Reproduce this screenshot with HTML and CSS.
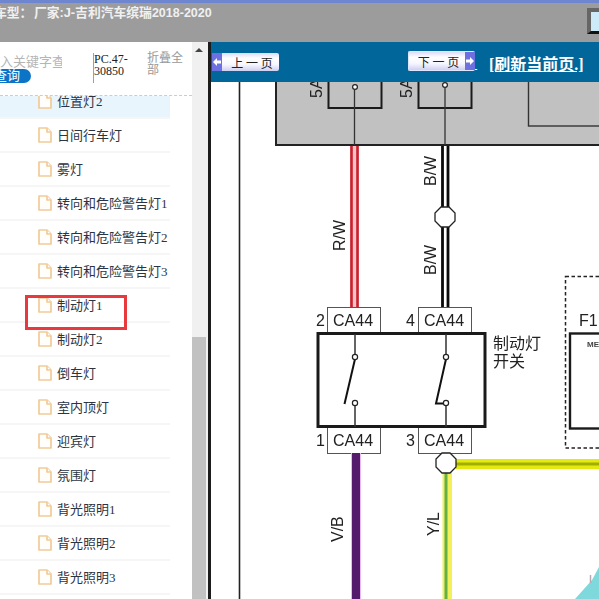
FILE: index.html
```html
<!DOCTYPE html>
<html lang="zh">
<head>
<meta charset="utf-8">
<title>电路图</title>
<link rel="stylesheet" href="styles.css">
</head>
<body>
<div class="page">
  <header class="topbar">
    <div class="title">车型：<span class="title-gap"></span>厂家:J-吉利汽车缤瑞<span class="title-year">2018-2020</span></div>
    <div class="win-icon"></div>
  </header>
  <div class="main">
    <aside class="sidebar">
      <div class="tree">
        <div class="tree-head">
          <div class="search">
            <div class="search-input">输入关键字查询</div>
            <div class="search-btn">查询</div>
          </div>
          <div class="code">PC.47-30850</div>
          <div class="collapse">折叠全部</div>
        </div>
        <ul class="list">
          <li class="row row-active"><svg class="file" viewBox="0 0 14 16"><path d="M1 1h8l4 4v10H1z"/><path d="M9 1v4h4"/></svg>位置灯2</li>
          <li class="row"><svg class="file" viewBox="0 0 14 16"><path d="M1 1h8l4 4v10H1z"/><path d="M9 1v4h4"/></svg>日间行车灯</li>
          <li class="row"><svg class="file" viewBox="0 0 14 16"><path d="M1 1h8l4 4v10H1z"/><path d="M9 1v4h4"/></svg>雾灯</li>
          <li class="row"><svg class="file" viewBox="0 0 14 16"><path d="M1 1h8l4 4v10H1z"/><path d="M9 1v4h4"/></svg>转向和危险警告灯1</li>
          <li class="row"><svg class="file" viewBox="0 0 14 16"><path d="M1 1h8l4 4v10H1z"/><path d="M9 1v4h4"/></svg>转向和危险警告灯2</li>
          <li class="row"><svg class="file" viewBox="0 0 14 16"><path d="M1 1h8l4 4v10H1z"/><path d="M9 1v4h4"/></svg>转向和危险警告灯3</li>
          <li class="row"><span class="mark"></span><svg class="file" viewBox="0 0 14 16"><path d="M1 1h8l4 4v10H1z"/><path d="M9 1v4h4"/></svg>制动灯1</li>
          <li class="row"><svg class="file" viewBox="0 0 14 16"><path d="M1 1h8l4 4v10H1z"/><path d="M9 1v4h4"/></svg>制动灯2</li>
          <li class="row"><svg class="file" viewBox="0 0 14 16"><path d="M1 1h8l4 4v10H1z"/><path d="M9 1v4h4"/></svg>倒车灯</li>
          <li class="row"><svg class="file" viewBox="0 0 14 16"><path d="M1 1h8l4 4v10H1z"/><path d="M9 1v4h4"/></svg>室内顶灯</li>
          <li class="row"><svg class="file" viewBox="0 0 14 16"><path d="M1 1h8l4 4v10H1z"/><path d="M9 1v4h4"/></svg>迎宾灯</li>
          <li class="row"><svg class="file" viewBox="0 0 14 16"><path d="M1 1h8l4 4v10H1z"/><path d="M9 1v4h4"/></svg>氛围灯</li>
          <li class="row"><svg class="file" viewBox="0 0 14 16"><path d="M1 1h8l4 4v10H1z"/><path d="M9 1v4h4"/></svg>背光照明1</li>
          <li class="row"><svg class="file" viewBox="0 0 14 16"><path d="M1 1h8l4 4v10H1z"/><path d="M9 1v4h4"/></svg>背光照明2</li>
          <li class="row"><svg class="file" viewBox="0 0 14 16"><path d="M1 1h8l4 4v10H1z"/><path d="M9 1v4h4"/></svg>背光照明3</li>
        </ul>
      </div>
      <div class="scrollbar">
        <div class="scroll-up"></div>
        <div class="scroll-thumb"></div>
      </div>
    </aside>
    <section class="viewer">
      <nav class="pager">
        <a class="btn btn-prev"><svg class="arrow" viewBox="0 0 10 16"><path d="M1 8l4-4v2.500h4v3H5V12z"/></svg><span class="btn-label">上 一 页</span></a>
        <a class="btn btn-next"><span class="btn-label">下 一 页</span><svg class="arrow" viewBox="0 0 10 16"><path d="M9 8L5 4v2.500H1v3h4V12z"/></svg></a>
        <span class="gap-link">&nbsp;</span>
        <a class="refresh">[刷新当前页.]</a>
      </nav>
      <svg class="diagram" viewBox="211 82 388 517" xmlns="http://www.w3.org/2000/svg">
        <rect x="211" y="82" width="388" height="517" fill="#fff"/>
        <path d="M239.500 82V599" stroke="#222" stroke-width="1.600" fill="none"/>

        <rect x="276" y="70" width="340" height="75" fill="#c1c1c1" stroke="#222" stroke-width="2"/>
        <rect x="328.500" y="60" width="53" height="48" fill="none" stroke="#1a1a1a" stroke-width="2"/>
        <rect x="418.500" y="60" width="53" height="48" fill="none" stroke="#1a1a1a" stroke-width="2"/>
        <rect x="528.500" y="60" width="90" height="66" fill="none" stroke="#333" stroke-width="1.400"/>
        <path d="M354.500 90V145M445 88V145" stroke="#333" stroke-width="1.300"/>
        <circle cx="355" cy="87" r="2.400" fill="#fff" stroke="#222" stroke-width="1.200"/>
        <circle cx="445" cy="85" r="2.400" fill="#fff" stroke="#222" stroke-width="1.200"/>
        <text class="lbl" transform="translate(322 98) rotate(-90)">5A</text>
        <text class="lbl" transform="translate(412 98) rotate(-90)">5A</text>

        <rect x="350" y="146" width="9" height="161" fill="#f7c3c6"/>
        <path d="M351.500 146V307M357.500 146V307" stroke="#c8202c" stroke-width="2.600"/>
        <path d="M442.500 146V307M448 146V307" stroke="#0a0a0a" stroke-width="2.800"/>
        <polygon points="441,207 449,207 455,213 455,221 449,227 441,227 435,221 435,213" fill="#fff" stroke="#222" stroke-width="1.300"/>
        <text class="lbl" transform="translate(345 251) rotate(-90)">R/W</text>
        <text class="lbl" transform="translate(436 186) rotate(-90)">B/W</text>
        <text class="lbl" transform="translate(436 275) rotate(-90)">B/W</text>

        <rect x="327.500" y="307.500" width="53" height="26" fill="#fff" stroke="#555" stroke-width="1"/>
        <rect x="418.500" y="307.500" width="53" height="26" fill="#fff" stroke="#555" stroke-width="1"/>
        <rect x="327.500" y="427.500" width="53" height="26" fill="#fff" stroke="#555" stroke-width="1"/>
        <rect x="418.500" y="427.500" width="53" height="26" fill="#fff" stroke="#555" stroke-width="1"/>
        <text class="ca" x="333" y="326">CA44</text>
        <text class="ca" x="424" y="326">CA44</text>
        <text class="ca" x="333" y="446">CA44</text>
        <text class="ca" x="424" y="446">CA44</text>
        <text class="ca" x="316" y="326">2</text>
        <text class="ca" x="406" y="326">4</text>
        <text class="ca" x="316" y="446">1</text>
        <text class="ca" x="406" y="446">3</text>

        <rect x="318" y="333.500" width="167" height="93" fill="#fff" stroke="#1a1a1a" stroke-width="3"/>
        <path d="M355 334V355M355 406V427M446 334V355M446 406V427" stroke="#333" stroke-width="1.500"/>
        <path d="M355 359L344.500 404" stroke="#111" stroke-width="2" fill="none"/>
        <path d="M446 359L436 403.500H443" stroke="#111" stroke-width="2" fill="none"/>
        <circle cx="355" cy="357" r="2.600" fill="#fff" stroke="#222" stroke-width="1.200"/>
        <circle cx="355" cy="403" r="2.600" fill="#fff" stroke="#222" stroke-width="1.200"/>
        <circle cx="446" cy="357" r="2.600" fill="#fff" stroke="#222" stroke-width="1.200"/>
        <circle cx="446" cy="403" r="2.600" fill="#fff" stroke="#222" stroke-width="1.200"/>
        <text class="cn" x="493" y="349">制动灯</text>
        <text class="cn" x="493" y="367">开关</text>

        <rect x="565.500" y="276.500" width="60" height="171.500" fill="none" stroke="#222" stroke-width="1.500" stroke-dasharray="3.500 2.500"/>
        <text class="f1" x="579" y="326">F1</text>
        <rect x="570" y="333.500" width="60" height="95" fill="#fff" stroke="#1a1a1a" stroke-width="2.400"/>
        <text class="me" x="587" y="347">ME</text>

        <rect x="351" y="453" width="10" height="146" fill="#e9b8ec"/>
        <rect x="352" y="453" width="8" height="146" fill="#541a6b"/>
        <rect x="442.500" y="470" width="9.500" height="129" fill="#f3f05a"/>
        <rect x="444.500" y="470" width="3" height="129" fill="#62b04a"/>
        <rect x="456" y="459" width="143" height="10" fill="#e4ea10"/>
        <rect x="456" y="462.500" width="143" height="3" fill="#9fae00"/>
        <polygon points="442,453 450,453 456,459 456,467 450,473 442,473 436,467 436,459" fill="#fff" stroke="#222" stroke-width="1.300"/>
        <text class="lbl" transform="translate(343 542) rotate(-90)">V/B</text>
        <text class="lbl" transform="translate(439 536) rotate(-90)">Y/L</text>

        <polygon points="575,599 592,580 599,567 599,599" fill="#7fd9dc"/>
        <path d="M590.500 575V583" stroke="#b8a8b0" stroke-width="1.500"/>
      </svg>
    </section>
  </div>
</div>
</body>
</html>
```
FILE: styles.css
```css
* { box-sizing: border-box; }
html, body { margin: 0; padding: 0; }
body {
  width: 599px;
  height: 599px;
  overflow: hidden;
  background: #fff;
  font-family: "Liberation Sans", "Noto Sans CJK SC", sans-serif;
}
.page { display: flex; flex-direction: column; height: 599px; }

.topbar {
  flex: 0 0 42px;
  display: flex;
  justify-content: space-between;
  background: #9c9c9c;
  border-top: 3px solid #6d86cf;
  overflow: hidden;
}
.title {
  margin-left: -6px;
  margin-top: 1px;
  font-size: 12.800px;
  font-weight: bold;
  line-height: 17px;
  color: #f0f0f0;
  white-space: nowrap;
}
.title-gap { display: inline-block; width: 1.500px; }
.title-year { font-size: 12.500px; }
.win-icon {
  width: 20px;
  height: 26px;
  margin-top: 5px;
  margin-right: -8px;
  background: #cdeaf8;
  border: 4px solid #666;
  border-bottom: 3px solid #111;
  border-right: 0;
}

.main { flex: 1; display: flex; min-height: 0; }

.sidebar {
  flex: 0 0 211px;
  display: flex;
  background: #fff;
  border-right: 3px solid #1c1c1c;
}
.tree { flex: 0 0 192px; display: flex; flex-direction: column; min-width: 0; overflow: hidden; }
.tree-head {
  position: relative;
  z-index: 1;
  flex: 0 0 54px;
  display: flex;
  background: #fff;
  border-bottom: 1px dashed #ccc;
}
.search { flex: 0 0 93px; overflow: hidden; padding-top: 12px; }
.search-input {
  margin-left: -13px;
  width: 75px;
  height: 15px;
  font-size: 13px;
  line-height: 15px;
  color: #b5b5b5;
  white-space: nowrap;
  overflow: hidden;
}
.search-btn {
  margin-left: -20px;
  width: 51px;
  height: 14px;
  border-radius: 0 7px 7px 0;
  background: #0c74c6;
  color: #fff;
  font-size: 13px;
  line-height: 14px;
  padding-left: 14px;
}
.code {
  flex: 0 0 54px;
  margin: 11px 0 12px;
  border-left: 1px solid #b89a78;
  font-family: "Liberation Serif", serif;
  font-size: 12px;
  line-height: 12px;
  color: #222;
}
.collapse {
  width: 38px;
  margin-top: 10px;
  font-size: 12px;
  line-height: 12px;
  color: #999;
}

.list { list-style: none; margin: -11px 0 0; padding: 0; width: 170px; }
.row {
  position: relative;
  display: flex;
  align-items: center;
  height: 34px;
  padding: 0 0 2px 38px;
  border-bottom: 2px solid #f6f6f6;
  font-family: "Liberation Serif", "Noto Sans CJK SC", serif;
  font-size: 13px;
  color: #2c3444;
  white-space: nowrap;
}
.row-active { background: #e9f5fd; }
.file {
  flex: 0 0 14px;
  width: 14px;
  height: 16px;
  margin: 2px 5px 0 0;
  fill: #fffefb;
  stroke: #f1cb98;
  stroke-width: 1.700;
  stroke-linejoin: round;
}
.mark {
  position: absolute;
  left: 25px;
  top: 6px;
  width: 102px;
  height: 35px;
  border: 3px solid #e8393f;
  z-index: 1;
}

.scrollbar {
  flex: 0 0 16px;
  position: relative;
  display: flex;
  flex-direction: column;
  justify-content: flex-end;
  background: #f0f0f0;
}
.scroll-up {
  position: absolute;
  left: 3px;
  top: 6px;
  border-left: 4px solid transparent;
  border-right: 4px solid transparent;
  border-bottom: 4px solid #444;
}
.scroll-thumb { height: 262px; margin-right: 2px; background: #c1c1c1; }

.viewer { flex: 1; min-width: 0; display: flex; flex-direction: column; overflow: hidden; }
.pager {
  flex: 0 0 40px;
  display: flex;
  align-items: center;
  padding-left: 1px;
  background: #016699;
}
.btn {
  display: flex;
  align-items: center;
  width: 67px;
  height: 18px;
  border-radius: 2px;
  background: linear-gradient(#dcdcf8, #fff 30%, #f6f6ff 65%, #cfcff2);
  font-size: 12px;
  color: #222;
}
.btn-label { flex: 1; padding-left: 3px; text-align: center; font-family: "Noto Sans CJK SC", sans-serif; }
.btn-next { height: 20px; margin-left: 129px; margin-top: -2px; border: 1px solid #dfe6ff; border-right: 0; }
.arrow {
  flex: 0 0 10px;
  align-self: stretch;
  background: #6d70e0;
  width: 10px;
  fill: #fff;
}
.gap-link {
  width: 6px;
  margin-top: 8px;
  line-height: 1;
  font-size: 8px;
  color: #fff;
  text-decoration: underline;
}
.refresh {
  margin-left: 8px;
  margin-top: 2px;
  font-family: "Liberation Serif", "Noto Sans CJK SC", serif;
  font-size: 16px;
  font-weight: bold;
  color: #fff;
  text-decoration: underline;
  white-space: nowrap;
}

.diagram { display: block; width: 388px; height: 517px; flex: none; filter: blur(0.3px); }
.lbl { font-family: "Liberation Sans", sans-serif; font-size: 16px; fill: #222; }
.ca { font-family: "Liberation Sans", sans-serif; font-size: 16px; fill: #222; }
.cn { font-family: "Noto Sans CJK SC", sans-serif; font-size: 16px; fill: #222; }
.f1 { font-family: "Liberation Sans", sans-serif; font-size: 16px; fill: #222; }
.me { font-family: "Liberation Sans", sans-serif; font-size: 8px; font-weight: bold; fill: #444; }
```
